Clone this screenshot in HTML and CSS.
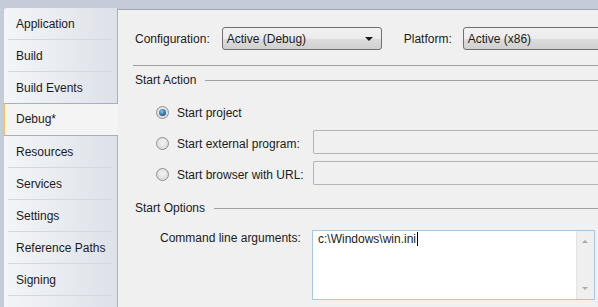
FILE: index.html
```html
<!DOCTYPE html>
<html lang="en">
<head>
<meta charset="UTF-8" />
<title>Project Properties - Debug</title>
<link rel="stylesheet" href="styles.css">
</head>
<body>
<div class="frame">
  <ul class="tabs">
    <li class="tab">Application</li>
    <li class="tab">Build</li>
    <li class="tab">Build Events</li>
    <li class="tab active">Debug*</li>
    <li class="tab">Resources</li>
    <li class="tab">Services</li>
    <li class="tab">Settings</li>
    <li class="tab">Reference Paths</li>
    <li class="tab">Signing</li>
  </ul>

  <div class="panel">
    <div class="config-row">
      <span class="label">Configuration:</span>
      <div class="combo config"><span>Active (Debug)</span><span class="arrow"></span></div>
      <span class="label platform-label">Platform:</span>
      <div class="combo platform"><span>Active (x86)</span></div>
    </div>

    <div class="rule"></div>

    <div class="group-title">Start Action</div>

    <div class="option">
      <span class="radio checked"></span>
      <span class="option-label">Start project</span>
    </div>
    <div class="option">
      <span class="radio"></span>
      <span class="option-label">Start external program:</span>
      <div class="field"></div>
    </div>
    <div class="option">
      <span class="radio"></span>
      <span class="option-label">Start browser with URL:</span>
      <div class="field"></div>
    </div>

    <div class="group-title options-title">Start Options</div>

    <div class="args-row">
      <span class="args-label">Command line arguments:</span>
      <div class="textbox">
        <div class="textbox-text"><span class="caret">c:\Windows\win.ini</span></div>
        <div class="scrollbar">
          <span class="up"></span>
          <span class="down"></span>
        </div>
      </div>
    </div>
  </div>
</div>
</body>
</html>
```

FILE: styles.css
```css
html, body {
  margin: 0;
  height: 100%;
  overflow: hidden;
}
body {
  font-family: "Liberation Sans", Arial, sans-serif;
  font-size: 12px;
  color: #1b1b1b;
  background: #c4cbd9;
}
.frame {
  display: flex;
  height: 100%;
  padding: 8px 0 0 4px;
  box-sizing: border-box;
}

/* left tab column */
.tabs {
  list-style: none;
  margin: 0;
  padding: 0;
  width: 113px;
  flex-shrink: 0;
  background: linear-gradient(to right, #f3f5f8, #dde1e8);
  border-right: 1px solid #a9b0bd;
  border-top-left-radius: 3px;
  position: relative;
  z-index: 1;
}
.tab {
  height: 32px;
  line-height: 32px;
  padding-left: 12px;
  position: relative;
}
.tab::after {
  content: "";
  position: absolute;
  left: 4px;
  right: 5px;
  bottom: 0;
  border-bottom: 1px solid #d3d8e0;
}
.tab.active {
  background: #f4f4f4;
  margin-left: -1px;
  margin-right: -1px;
  border-left: 2px solid #f1c764;
  border-top: 1px solid #a9b0bd;
  border-bottom: 1px solid #a9b0bd;
  height: 31px;
  line-height: 31px;
  margin-top: -1px;
  padding-left: 11px;
}
.tab.active::after {
  display: none;
}

/* right panel */
.panel {
  flex: 1;
  background: #f0f0f0;
  border-top: 1px solid #a0a6b0;
  margin-top: 1px;
  padding: 17px 0 0 17px;
  min-width: 0;
  overflow: hidden;
}
.config-row {
  display: flex;
  align-items: center;
  height: 23px;
  white-space: nowrap;
}
.combo {
  height: 23px;
  border: 1px solid #707070;
  border-radius: 3px;
  background: linear-gradient(#f2f2f2 0%, #ebebeb 50%, #dddddd 51%, #cfcfcf 100%);
  display: flex;
  align-items: center;
  padding-left: 4px;
  box-sizing: border-box;
  position: relative;
  flex-shrink: 0;
}
.combo.config {
  width: 160px;
  margin-left: 12px;
}
.combo.platform {
  width: 200px;
  margin-left: 11px;
}
.arrow {
  position: absolute;
  right: 8px;
  top: 9px;
  border-left: 4px solid transparent;
  border-right: 4px solid transparent;
  border-top: 4px solid #1b1b1b;
}
.platform-label {
  margin-left: 22px;
}
.rule {
  margin: 15px 0 0 -2px;
  border-top: 1px solid #a0a0a0;
}
.group-title {
  display: flex;
  align-items: center;
  height: 16px;
  margin-top: 6px;
}
.group-title::after {
  content: "";
  flex: 1;
  border-top: 1px solid #a0a0a0;
  margin-left: 9px;
}
.option {
  display: flex;
  align-items: center;
  height: 31px;
  padding-left: 21px;
  white-space: nowrap;
}
.group-title + .option {
  margin-top: 9px;
}
.radio {
  width: 11px;
  height: 11px;
  border-radius: 50%;
  border: 1px solid #8e8f8f;
  background: radial-gradient(circle at 50% 40%, #f4f4f4, #d2d2d2);
  flex-shrink: 0;
  position: relative;
}
.radio.checked::after {
  content: "";
  position: absolute;
  left: 2px;
  top: 2px;
  width: 7px;
  height: 7px;
  border-radius: 50%;
  background: radial-gradient(circle at 40% 35%, #7ec3f2, #1f5d97 70%, #123e6a);
}
.option-label {
  width: 136px;
  margin-left: 8px;
}
.field {
  flex: 1;
  height: 22px;
  border: 1px solid #b5b5b5;
  border-right: none;
  border-radius: 2px 0 0 2px;
  background: #f0f0f0;
  margin-top: -3px;
}
.options-title {
  margin-top: 10px;
}
.args-row {
  display: flex;
  margin-top: 14px;
  padding-left: 25px;
  white-space: nowrap;
}
.args-label {
  width: 152px;
  line-height: 16px;
}
.textbox {
  flex: 1;
  height: 68px;
  margin-right: 3px;
  border: 1px solid #a6c6e2;
  background: #fff;
  display: flex;
}
.textbox-text {
  flex: 1;
  padding: 1px 0 0 5px;
  line-height: 15px;
}
.caret {
  border-right: 1px solid #000;
  padding-right: 1px;
}
.scrollbar {
  width: 17px;
  background: #efefef;
  border-left: 1px solid #e4e4e4;
  position: relative;
}
.up, .down {
  position: absolute;
  left: 5px;
  border-left: 3px solid transparent;
  border-right: 3px solid transparent;
}
.up {
  top: 9px;
  border-bottom: 3px solid #a8a8a8;
}
.down {
  bottom: 9px;
  border-top: 3px solid #a8a8a8;
}
```
